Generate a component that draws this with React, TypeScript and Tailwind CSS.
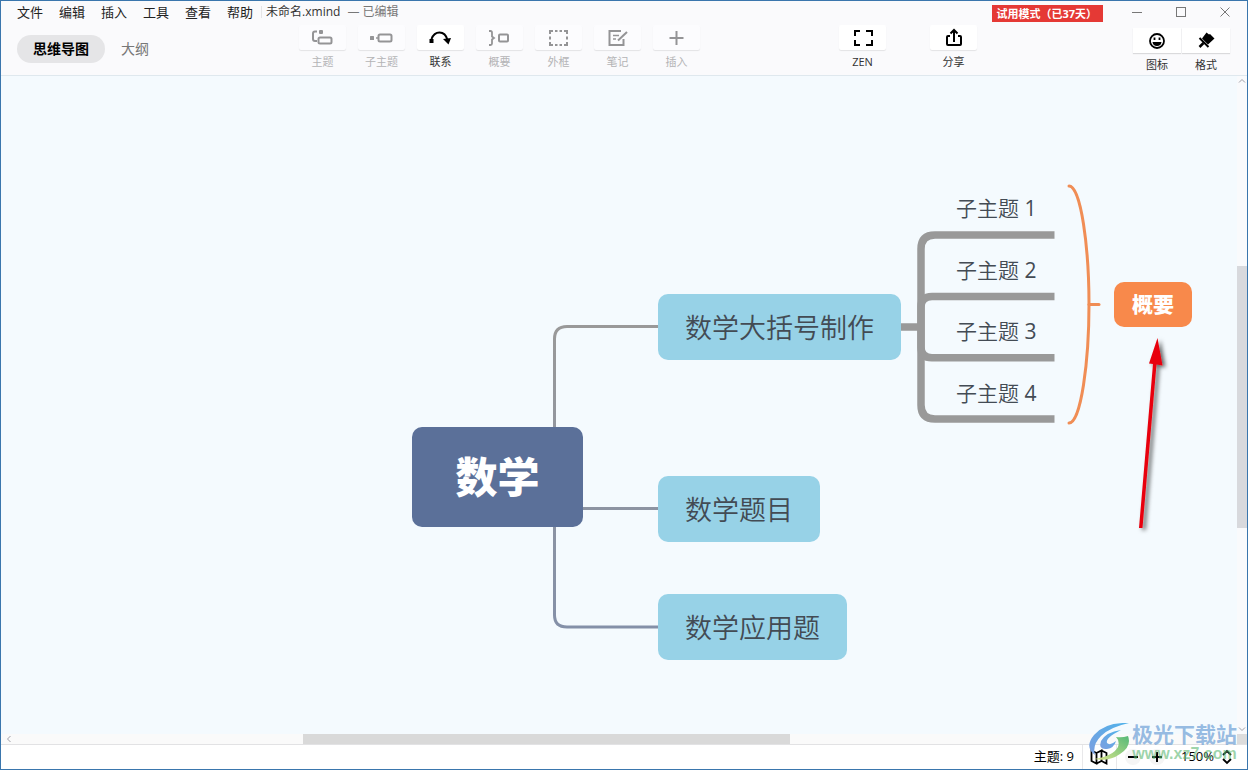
import type { ReactNode } from "react";
import clsx from "clsx";

/* ─── Icons ──────────────────────────────────────────────────────────────────── */

const iconProps = {
  width: 24,
  height: 20,
  viewBox: "0 0 24 20",
  fill: "none",
  stroke: "currentColor",
  strokeWidth: 2,
};

const TopicIcon = () => (
  <svg {...iconProps}>
    <path d="M6 3.500H4Q2 3.500 2 5.500V11Q2 13 4 13H6" />
    <rect x="7.500" y="9.500" width="13" height="6" rx="1.500" />
    <rect x="8" y="2" width="4" height="4" rx="1" fill="currentColor" stroke="none" />
  </svg>
);

const SubtopicIcon = () => (
  <svg {...iconProps}>
    <rect x="0" y="8" width="4" height="4" rx="0.500" fill="currentColor" stroke="none" />
    <path d="M6 10H8.500" strokeWidth="1.500" />
    <rect x="8.500" y="6.500" width="13" height="7" rx="1.500" />
  </svg>
);

const RelationIcon = () => (
  <svg {...iconProps}>
    <rect x="0.500" y="11" width="4" height="4" fill="currentColor" stroke="none" />
    <path d="M2.500 11Q5 4.500 10.500 4.500Q16.500 4.500 18.500 12" />
    <path d="M14 11L22 10L19.500 16.500Z" fill="currentColor" stroke="none" />
  </svg>
);

const SummaryIcon = () => (
  <svg {...iconProps}>
    <path d="M1 3H2.500Q4 3 4 4.500V8.500L6 10L4 11.500V15.500Q4 17 2.500 17H1" strokeWidth="1.800" />
    <rect x="11" y="6.500" width="9" height="7" rx="1" />
  </svg>
);

const BoundaryIcon = () => (
  <svg {...iconProps}>
    <path d="M3 6V3H6M8 3H10.500M12.500 3H15M17 3H20V6M20 8.500V11.500M20 14V17H17M15 17H12.500M10.500 17H8M6 17H3V14M3 11.500V8.500" />
  </svg>
);

const NoteIcon = () => (
  <svg {...iconProps}>
    <path d="M15 3H3.500V17H17.500V11" />
    <path d="M7 7.500H13M7 11H10" strokeWidth="1.500" />
    <path d="M12 12.500L21 4" />
  </svg>
);

const PlusIcon = () => (
  <svg {...iconProps}>
    <path d="M11.500 3V17M4.500 10H18.500" />
  </svg>
);

const ZenIcon = () => (
  <svg {...iconProps}>
    <path d="M4 8V3H9M15 3H21V8M21 12V17H15M9 17H4V12" />
  </svg>
);

const ShareIcon = () => (
  <svg {...iconProps}>
    <path d="M8 8H6Q5 8 5 9V16Q5 17 6 17H18Q19 17 19 16V9Q19 8 18 8H16M12 14V3M8.500 5.500L12 2L15.500 5.500" />
  </svg>
);

const SmileIcon = () => (
  <svg {...iconProps} strokeWidth="1.800">
    <circle cx="12" cy="10" r="7" />
    <path d="M7.500 11H16.500Q16 15 12 15Q8 15 7.500 11Z" fill="currentColor" stroke="none" />
    <path d="M9.500 6.500V9M14.500 6.500V9" strokeWidth="1.800" />
  </svg>
);

const BrushIcon = () => (
  <svg {...iconProps}>
    <path d="M12.500 1.500L15 3.500L16 3L20.500 7.500L14 13.500L8 7.500Z" fill="currentColor" stroke="none" />
    <path d="M5.500 7L14.500 16" />
    <path d="M9.500 12L5.500 16" strokeWidth="2.500" />
  </svg>
);

/* ─── Header ─────────────────────────────────────────────────────────────────── */

const MENUS = ["文件", "编辑", "插入", "工具", "查看", "帮助"];

const TOOLS = [
  { label: "主题", icon: <TopicIcon /> },
  { label: "子主题", icon: <SubtopicIcon /> },
  { label: "联系", icon: <RelationIcon />, active: true },
  { label: "概要", icon: <SummaryIcon /> },
  { label: "外框", icon: <BoundaryIcon /> },
  { label: "笔记", icon: <NoteIcon /> },
  { label: "插入", icon: <PlusIcon /> },
];

function ToolButton({ label, icon, active = false }: { label: string; icon: ReactNode; active?: boolean }) {
  return (
    <button
      type="button"
      disabled={!active}
      className={clsx(
        "flex w-[47px] flex-col items-center gap-1 text-[11px] leading-4",
        active ? "text-black" : "text-[#949496]"
      )}
    >
      <span
        className={clsx(
          "flex h-[25px] w-full items-center justify-center rounded-xs shadow-[0_1px_1px_#00000018]",
          active ? "bg-white" : "bg-[#fcfcfe]"
        )}
      >
        {icon}
      </span>
      <span className={active ? "text-[#333]" : "text-[#b4b4b6]"}>{label}</span>
    </button>
  );
}

function TitleBar() {
  return (
    <div className="flex h-[22px] items-center pl-4">
      <nav className="flex gap-4 text-[13px] leading-5 text-[#222]">
        {MENUS.map((m) => (
          <button key={m} type="button">
            {m}
          </button>
        ))}
      </nav>
      <div className="ml-2 h-3 w-px bg-[#e4e4e6]" />
      <p className="ml-1 text-[12px] leading-5 text-[#333]">
        未命名.xmind <span className="ml-1 text-[#777]">— 已编辑</span>
      </p>
      <span className="mt-[2px] ml-auto h-[17px] bg-[#e53935] pr-[6px] pl-1 text-[11px] leading-[17px] font-bold text-white">
        试用模式（已37天）
      </span>
      <div className="mr-4 ml-7 flex gap-[32px] text-[#777]">
        <button type="button" aria-label="最小化">
          <svg width="12" height="12" fill="none" stroke="currentColor">
            <path d="M1 6.500H11" />
          </svg>
        </button>
        <button type="button" aria-label="最大化">
          <svg width="12" height="12" fill="none" stroke="currentColor">
            <rect x="1.500" y="1.500" width="9" height="9" />
          </svg>
        </button>
        <button type="button" aria-label="关闭">
          <svg width="12" height="12" fill="none" stroke="currentColor">
            <path d="M1.500 1.500L10.500 10.500M10.500 1.500L1.500 10.500" />
          </svg>
        </button>
      </div>
    </div>
  );
}

function Toolbar() {
  return (
    <div className="flex h-[52px] items-start">
      <div className="flex w-[298px] shrink-0 gap-4 pt-3 pl-4 text-[14px] leading-7">
        <button type="button" className="rounded-full bg-[#e5e5e7] px-4 font-bold text-black">
          思维导图
        </button>
        <button type="button" className="text-[#777]">
          大纲
        </button>
      </div>
      <div className="flex shrink-0 gap-3 pt-[2px]">
        {TOOLS.map((t) => (
          <ToolButton key={t.label} {...t} />
        ))}
      </div>
      <div className="flex flex-1 justify-center gap-11 pt-[2px] pr-[17px]">
        <ToolButton label="ZEN" icon={<ZenIcon />} active />
        <ToolButton label="分享" icon={<ShareIcon />} active />
      </div>
      <div className="mr-[17px] flex gap-px pt-[5px]">
        {[
          { label: "图标", icon: <SmileIcon /> },
          { label: "格式", icon: <BrushIcon /> },
        ].map((t) => (
          <button key={t.label} type="button" className="flex w-12 flex-col items-center gap-1 text-[11px] leading-4 text-[#333]">
            <span className="flex h-[25px] w-full items-center justify-center bg-white text-black shadow-[0_1px_1px_#00000020]">
              {t.icon}
            </span>
            {t.label}
          </button>
        ))}
      </div>
    </div>
  );
}

/* ─── Mind map ───────────────────────────────────────────────────────────────── */

const BRANCHES = [
  { title: "数学大括号制作", place: "left-[657px] top-[218px]" },
  { title: "数学题目", place: "left-[657px] top-[400px]" },
  { title: "数学应用题", place: "left-[657px] top-[518px]" },
];

const SUBTOPICS = [
  { n: 1, place: "left-[955px] top-[116px]" },
  { n: 2, place: "left-[955px] top-[178px]" },
  { n: 3, place: "left-[955px] top-[239px]" },
  { n: 4, place: "left-[955px] top-[301px]" },
];

function Connectors() {
  return (
    <svg className="absolute top-0 left-0" width="1236" height="658" viewBox="1 76 1236 658" fill="none">
      <defs>
        <linearGradient id="stem" gradientUnits="userSpaceOnUse" x1="0" y1="326" x2="0" y2="628">
          <stop offset="0" stopColor="#999999" />
          <stop offset="1" stopColor="#8490a8" />
        </linearGradient>
        <filter id="shadow" x="-100%" y="-10%" width="300%" height="120%">
          <feDropShadow dx="3" dy="2" stdDeviation="2" floodColor="#000" floodOpacity="0.6" />
        </filter>
      </defs>

      <g stroke="url(#stem)" strokeWidth="3">
        <path d="M658 326.500H567Q554.500 326.500 554.500 339V615Q554.500 627 567 627H658" />
        <path d="M583 508.500L658 508.600" />
      </g>

      <g stroke="#999999" strokeWidth="7.500">
        <path d="M901 327H921" />
        <path d="M1054.500 235H935Q921 235 921 249V405Q921 419 935 419H1054.500" />
        <path d="M1054.500 296.500H932Q921 296.500 921 307V347Q921 357.800 932 357.800H1054.500" />
      </g>

      <g stroke="#f08d55" strokeWidth="3" strokeLinecap="round">
        <path d="M1069 186C1081 186 1089 248 1089 304.500C1089 361 1081 423 1069 423" />
        <path d="M1089 304.500H1099" />
      </g>

      <g filter="url(#shadow)">
        <path d="M1139 528L1153 364L1149 363.500L1157.500 338L1162.500 365.500L1156.500 364.500L1142.500 528Z" fill="#e8060d" />
      </g>
    </svg>
  );
}

function MindMap() {
  return (
    <main className="relative min-h-[658px] flex-1 overflow-hidden bg-[#f4fafe]">
      <Connectors />
      <div className="absolute top-[351px] left-[411px] flex h-[100px] w-[171px] items-center justify-center rounded-[10px] bg-[#5b7099] text-[42px] leading-none font-black text-white">
        数学
      </div>
      {BRANCHES.map((b) => (
        <div
          key={b.title}
          className={clsx(
            "absolute flex h-[66px] items-center rounded-[10px] bg-[#97d2e7] px-[27px] text-[27px] leading-none font-[350] whitespace-nowrap text-[#434b54]",
            b.place
          )}
        >
          {b.title}
        </div>
      ))}
      {SUBTOPICS.map((s) => (
        <div key={s.n} className={clsx("absolute text-[21px] leading-8 font-[350] whitespace-nowrap text-[#434b54]", s.place)}>
          子主题 <span className="font-normal">{s.n}</span>
        </div>
      ))}
      <div className="absolute top-[206px] left-[1113px] flex h-[45px] w-[78px] items-center justify-center rounded-[10px] bg-[#f8894b] text-[21px] leading-none font-black text-white">
        概要
      </div>
    </main>
  );
}

/* ─── Scrollbars and status bar ──────────────────────────────────────────────── */

function Chevron({ d }: { d: string }) {
  return (
    <svg width="10" height="10" fill="none" stroke="#a0a0a8">
      <path d={d} />
    </svg>
  );
}

function StatusBar() {
  return (
    <footer className="flex h-[25px] items-center justify-end border-t border-[#e2e2e4] bg-white text-[13px] text-black">
      <span className="pr-2">主题: 9</span>
      <button type="button" aria-label="导航图" className="flex h-full w-[35px] items-center justify-center border-x border-[#e8e8ea]">
        <svg width="18" height="16" fill="none" stroke="currentColor" strokeWidth="1.800">
          <path d="M1.500 1.500L6.500 4V14.500L1.500 12ZM6.500 4L11.500 1.500V12L6.500 14.500M11.500 1.500L16.500 4V14.500L11.500 12" />
        </svg>
      </button>
      <button type="button" aria-label="缩小" className="ml-2 flex size-4 items-center justify-center rounded-full bg-[#f5f5f5]">
        <svg width="10" height="10" stroke="currentColor" strokeWidth="2">
          <path d="M0 5H10" />
        </svg>
      </button>
      <button type="button" aria-label="放大" className="ml-2 flex size-4 items-center justify-center rounded-full bg-[#f5f5f5]">
        <svg width="10" height="10" stroke="currentColor" strokeWidth="2">
          <path d="M0 5H10M5 0V10" />
        </svg>
      </button>
      <span className="ml-4">150%</span>
      <button type="button" aria-label="缩放比例" className="mr-[15px] ml-2">
        <svg width="10" height="16" fill="none" stroke="currentColor" strokeWidth="1.800">
          <path d="M1 6L5 2L9 6M1 10L5 14L9 10" />
        </svg>
      </button>
    </footer>
  );
}

function Watermark() {
  return (
    <div className="pointer-events-none absolute right-[10px] bottom-[7px] flex items-center gap-[3px]">
      <svg width="40" height="38" viewBox="0 0 40 38">
        <defs>
          <linearGradient id="sky" x1="0" y1="1" x2="1" y2="0">
            <stop offset="0" stopColor="#7c9fe0" />
            <stop offset="1" stopColor="#4fb2ea" />
          </linearGradient>
          <linearGradient id="leaf" x1="0" y1="1" x2="1" y2="0">
            <stop offset="0" stopColor="#dbe58a" />
            <stop offset="1" stopColor="#55b978" />
          </linearGradient>
        </defs>
        <path d="M40 0Q16 -1 5 12Q-5 24 6 32Q3 22 12 13Q21 4 40 0Z" fill="url(#sky)" />
        <path d="M32 7Q17 9 12 18Q9 27 18 26Q25 25 27 18Q21 23 18 20Q16 15 32 7Z" fill="url(#sky)" />
        <path d="M27 14Q33 15 39 13Q43 23 31 31Q20 39 5 36Q24 33 29 24Q31 18 27 14Z" fill="url(#leaf)" />
      </svg>
      <div className="flex flex-col text-center">
        <span className="text-[21px] leading-6 font-bold text-[#6c9fd6]/70">极光下载站</span>
        <span className="font-['Liberation_Sans'] text-[16px] leading-4 font-bold text-[#5cb873]/60">www.xz7.com</span>
      </div>
    </div>
  );
}

/* ─── Page ───────────────────────────────────────────────────────────────────── */

export default function App() {
  return (
    <div className="relative flex min-h-screen flex-col border border-[#3a76ad] bg-white font-['Open_Sans','Noto_Sans_CJK_SC',sans-serif]">
      <header className="border-b border-[#dfe8ee] bg-[#fafafc]">
        <TitleBar />
        <Toolbar />
      </header>

      <div className="flex flex-1">
        <MindMap />
        <div className="flex w-[10px] shrink-0 flex-col items-center bg-[#f9fafc]">
          <Chevron d="M2 6.500L5 3.500L8 6.500" />
          <div className="mt-[180px] h-[262px] w-full bg-[#d8d9dd]" />
          <div className="mt-auto">
            <Chevron d="M2 3.500L5 6.500L8 3.500" />
          </div>
        </div>
      </div>

      <div className="flex h-[10px] items-center bg-[#fafafa]">
        <div className="w-[302px] pl-[3px]">
          <Chevron d="M6.500 2L3.500 5L6.500 8" />
        </div>
        <div className="h-full w-[487px] bg-[#d9d9d9]" />
        <div className="ml-auto h-full w-[10px] bg-[#dcdcdc]" />
      </div>

      <StatusBar />
      <Watermark />
    </div>
  );
}
